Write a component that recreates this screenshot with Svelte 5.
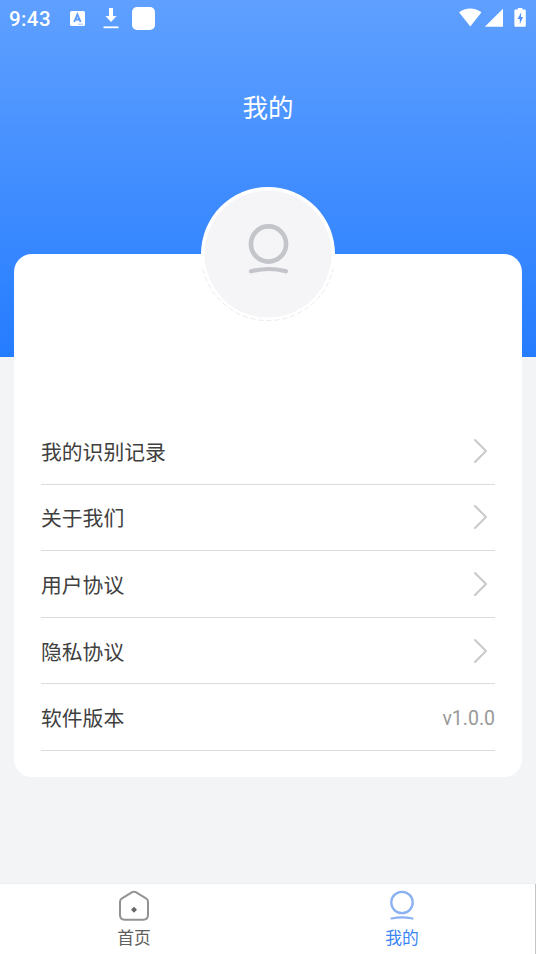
<script>
  const rows = ['我的识别记录', '关于我们', '用户协议', '隐私协议', '软件版本'];
  const version = 'v1.0.0';
</script>

<div class="screen">
  <header class="hero">
    <div class="status">
      <span class="time">9:43</span>
      <svg class="letter" width="15" height="15" viewBox="0 0 15 15">
        <rect width="15" height="15" rx="1.6" fill="#fff" />
        <path d="M4.2 11 7.4 3.500 10.600 11M5.300 8.500h4.200" fill="none" stroke="#5c9cff" stroke-width="1.900" />
        <path d="M8 13.200h5" stroke="#a9caff" stroke-width="1" />
      </svg>
      <svg class="download" width="16" height="21" viewBox="0 0 16 21">
        <path d="M6 0h4v8h3.600L8 14 2.400 8H6z" fill="#fff" />
        <path d="M.5 19.300h15" stroke="#fff" stroke-width="1.800" />
      </svg>
      <span class="block"></span>
      <svg class="signals" width="68" height="21" viewBox="0 0 68 21">
        <path d="M0 4.200C6.300-.9 16.200-.9 22.500 4.200L11.300 18.400z" fill="#fff" />
        <path d="M44 .8v18H25.800z" fill="#fff" />
        <path d="M58.800 0h4.600v1.600h2c.9 0 1.400.5 1.400 1.400v14.400c0 .9-.5 1.400-1.400 1.400h-8.600c-.9 0-1.400-.5-1.400-1.400V3c0-.9.5-1.400 1.400-1.400h2z" fill="#fff" />
        <path d="M62.300 4.200 58.500 11h2.300v5.200L64 9h-2.100z" fill="#4f92fb" />
      </svg>
    </div>
    <h1>我的</h1>
  </header>

  <main class="card">
    <div class="avatar">
      <svg width="135" height="135" viewBox="0 0 135 135">
        <circle cx="67" cy="67" r="67" fill="#fff" />
        <path d="M1.800 82a67 67 0 0 0 130.400 0" fill="none" stroke="#d9dadc" stroke-width=".6" stroke-dasharray="5 3" />
        <circle cx="67" cy="67" r="63.500" fill="#f5f5f7" />
        <circle cx="67.500" cy="57" r="17.600" fill="none" stroke="#c4c5ca" stroke-width="4.600" />
        <path d="M50 84.300q17.500-4.600 35 0" fill="none" stroke="#c4c5ca" stroke-width="4.200" stroke-linecap="round" />
      </svg>
    </div>
    <ul>
      {#each rows as label, i}
        <li>
          <span class="label">{label}</span>
          {#if i < rows.length - 1}
            <svg class="arrow" width="16" height="26" viewBox="0 0 16 26">
              <path d="M2 2 13 13 2 24" fill="none" stroke="#cacaca" stroke-width="2.100" stroke-linecap="round" stroke-linejoin="round" />
            </svg>
          {:else}
            <span class="version">{version}</span>
          {/if}
        </li>
      {/each}
    </ul>
  </main>

  <nav>
    <div class="tab">
      <svg width="34" height="32" viewBox="0 0 34 32">
        <path d="M15.200 2.200q1.800-.9 3.600 0L29 8.300q2 1.200 2 3.400V25q0 4.700-4.700 4.700H7.700Q3 29.700 3 25V11.700Q3 9.500 5 8.300z" fill="none" stroke="#929292" stroke-width="2" />
        <path d="m17 16.800 3 3-3 3-3-3z" fill="#666" />
      </svg>
      <span>首页</span>
    </div>
    <div class="tab active">
      <svg width="34" height="32" viewBox="0 0 34 32">
        <circle cx="17" cy="12.500" r="10.700" fill="none" stroke="#8bb1f2" stroke-width="2.300" />
        <path d="M6.500 28.500q10.500-2.400 21 0" fill="none" stroke="#8bb1f2" stroke-width="2.200" stroke-linecap="round" />
      </svg>
      <span>我的</span>
    </div>
  </nav>
</div>

<style>
  .screen {
    width: 536px;
    height: 954px;
    display: flex;
    flex-direction: column;
    overflow: hidden;
    background: #f3f4f6;
    color: #404040;
    font-family: Roboto, 'Noto Sans CJK SC', sans-serif;
  }
  .hero {
    flex: none;
    height: 357px;
    background: linear-gradient(#5fa0ff, #257cff);
    color: #fff;
  }
  .status {
    display: flex;
    height: 37px;
    padding: 0 9px;
    align-items: center;
  }
  .time {
    width: 61px;
    font-size: 20.500px;
    font-weight: 500;
    letter-spacing: 0.400px;
  }
  .letter { margin-right: 18px; }
  .download { margin-right: 13px; }
  .block {
    width: 23px;
    height: 23px;
    border-radius: 5px;
    background: #fff;
  }
  .signals { margin-left: auto; }
  h1 {
    margin: 52px 0 0;
    text-align: center;
    font-size: 25.500px;
    line-height: 38px;
    font-weight: 400;
  }
  .card {
    position: relative;
    flex: none;
    box-sizing: border-box;
    height: 523px;
    margin: -103px 14px 0;
    padding: 164px 27px 0;
    border-radius: 18px;
    background: #fff;
  }
  .avatar {
    position: absolute;
    top: -67px;
    left: 186.500px;
  }
  .avatar svg { display: block; }
  ul {
    margin: 0;
    padding: 0;
    list-style: none;
  }
  li {
    box-sizing: border-box;
    display: flex;
    align-items: center;
    justify-content: space-between;
    height: 66.600px;
    border-bottom: 1px solid #dcdcdc;
    font-size: 20.800px;
    line-height: 30px;
  }
  .label,
  .version { padding-top: 4px; }
  .arrow { margin-right: 6px; }
  .version { color: #999; font-size: 19.500px; }
  nav {
    box-sizing: border-box;
    display: flex;
    height: 71px;
    margin-top: auto;
    background: #fff;
    box-shadow: inset 0 1px #eeeff0, inset -1px 0 #c4c4c4;
  }
  .tab {
    flex: 1;
    display: flex;
    flex-direction: column;
    align-items: center;
    padding-top: 7px;
    color: #606060;
    font-size: 16.800px;
    line-height: 24px;
  }
  .tab span { margin-top: 4px; }
  .active { color: #3b85f6; }
</style>
